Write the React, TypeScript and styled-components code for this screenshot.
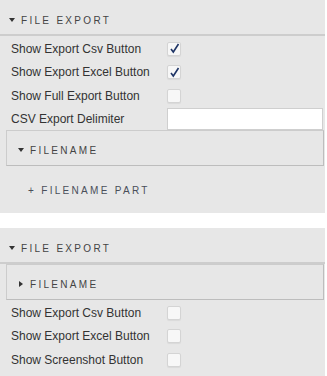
import React from "react";
import styled, { createGlobalStyle } from "styled-components";

const GlobalStyle = createGlobalStyle`
  html, body {
    margin: 0;
    padding: 0;
    background: #ffffff;
  }
  body {
    font-family: "Liberation Sans", Arial, sans-serif;
  }
`;

const Page = styled.div`
  display: flex;
  flex-direction: column;
  gap: 15px;
  width: 325px;
`;

const Panel = styled.section<{ $height: number }>`
  background: #e7e7e7;
  height: ${({ $height }) => $height}px;
  display: flex;
  flex-direction: column;
  overflow: hidden;
`;

const Header = styled.div`
  display: flex;
  align-items: center;
  gap: 6px;
  height: 28px;
  padding: 6px 0 0 9px;
  border-bottom: 2px solid #cdcdcd;
  flex-shrink: 0;
`;

const Caret = styled.span<{ $open: boolean }>`
  width: 0;
  height: 0;
  ${({ $open }) =>
    $open
      ? `border-left: 3px solid transparent;
         border-right: 3px solid transparent;
         border-top: 4px solid #333;`
      : `border-top: 3px solid transparent;
         border-bottom: 3px solid transparent;
         border-left: 4px solid #333;
         margin-left: 1px;
         margin-right: 1px;`}
`;

const Label = styled.span`
  font-size: 10px;
  letter-spacing: 2.3px;
  color: #444;
  text-transform: uppercase;
`;

const Rows = styled.div`
  display: flex;
  flex-direction: column;
  padding-top: 1px;
`;

const Row = styled.div<{ $h?: number }>`
  display: grid;
  grid-template-columns: 156px 1fr;
  align-items: center;
  height: ${({ $h }) => $h ?? 23.5}px;
  padding-left: 11px;
  font-size: 12px;
  color: #333;
`;

const Box = styled.span`
  width: 12px;
  height: 12px;
  display: flex;
  align-items: center;
  justify-content: center;
  background: #f7f7f7;
  border: 1px solid #d4d4d4;
  border-radius: 2px;
  box-shadow: 0 1px 1px rgba(0, 0, 0, 0.06);
`;

const TextInput = styled.input`
  box-sizing: border-box;
  width: 156px;
  height: 22px;
  margin: 0;
  background: #fff;
  border: 1px solid #cfcfcf;
  outline: none;
`;

const SubPanel = styled.div`
  display: flex;
  align-items: center;
  gap: 6px;
  box-sizing: border-box;
  height: 36px;
  margin: 0 1px 0 6px;
  padding: 4px 0 0 11px;
  border: 1px solid #cccccc;
  border-right-color: #bdbdbd;
  border-bottom-color: #bdbdbd;
  flex-shrink: 0;
`;

const AddButton = styled.div`
  display: flex;
  align-items: center;
  height: 47px;
  padding: 2px 0 0 28px;
  font-size: 10px;
  letter-spacing: 2.3px;
  color: #4a4f5a;
`;

const Check = () => (
  <svg width="11" height="11" viewBox="0 0 11 11">
    <path d="M2 6 L4.3 9 L9.5 1" fill="none" stroke="#1f3566" strokeWidth="1.6" />
  </svg>
);

const CheckRow = ({ label, checked }: { label: string; checked?: boolean }) => (
  <Row>
    <span>{label}</span>
    <Box>{checked && <Check />}</Box>
  </Row>
);

export default function App() {
  return (
    <>
      <GlobalStyle />
      <Page>
        <Panel $height={213}>
          <Header>
            <Caret $open />
            <Label>File Export</Label>
          </Header>
          <Rows>
            <CheckRow label="Show Export Csv Button" checked />
            <CheckRow label="Show Export Excel Button" checked />
            <CheckRow label="Show Full Export Button" />
            <Row $h={22.5}>
              <span>CSV Export Delimiter</span>
              <TextInput />
            </Row>
          </Rows>
          <SubPanel>
            <Caret $open />
            <Label>Filename</Label>
          </SubPanel>
          <AddButton>+ FILENAME PART</AddButton>
        </Panel>
        <Panel $height={148}>
          <Header>
            <Caret $open />
            <Label>File Export</Label>
          </Header>
          <SubPanel>
            <Caret $open={false} />
            <Label>Filename</Label>
          </SubPanel>
          <Rows>
            <CheckRow label="Show Export Csv Button" />
            <CheckRow label="Show Export Excel Button" />
            <CheckRow label="Show Screenshot Button" />
          </Rows>
        </Panel>
      </Page>
    </>
  );
}
